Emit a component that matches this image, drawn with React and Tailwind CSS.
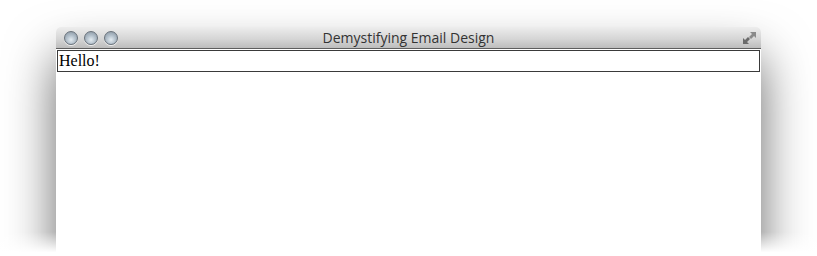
import React from 'react';

const Light = () => (
    <span className="w-[14px] h-[14px] rounded-full border border-[#6a737c] bg-[radial-gradient(circle_at_50%_65%,#e4ecf2_0%,#b3c0cb_45%,#84919d_100%)] shadow-[0_1px_0_rgba(255,255,255,0.7)]" />
);

const App = () => {
    return (
        <div className="relative w-[817px] h-[256px] bg-white overflow-hidden pt-[27px]">
            <div className="ml-[56px] w-[705px] h-[300px] rounded-t-[5px] bg-white shadow-[0_30px_50px_rgba(0,0,0,0.6)] flex flex-col">
                <div className="h-[22px] rounded-t-[5px] border-b border-[#5e5e5e] bg-[linear-gradient(#ededed,#d4d4d4_60%,#bdbdbd)] flex items-center relative">
                    <div className="flex gap-[6px] pl-[8px]">
                        <Light />
                        <Light />
                        <Light />
                    </div>
                    <span className="absolute inset-x-0 text-center text-[14px] font-medium text-[#333] font-['Open_Sans','DejaVu_Sans',sans-serif] leading-none top-[4px]">
                        Demystifying Email Design
                    </span>
                    <svg className="absolute right-[4px] top-[4px]" width="15" height="14" viewBox="0 0 15 14">
                        <path d="M8 1h6v6l-2-2-3 3-2-2 3-3z" fill="#8a8a8a" />
                        <path d="M7 13H1V7l2 2 3-3 2 2-3 3z" fill="#6a6a6a" />
                    </svg>
                </div>
                <div className="flex-1 bg-white pt-[1px] px-[1px]">
                    <div className="h-[22px] border border-[#3a3a3a] font-['Liberation_Serif',serif] text-[16px] leading-[20px] pl-[1px] text-black">
                        Hello!
                    </div>
                </div>
            </div>
            <div className="absolute inset-x-0 bottom-0 h-[24px] bg-[linear-gradient(rgba(255,255,255,0),#fff_85%)]" />
        </div>
    );
};

export default App;
